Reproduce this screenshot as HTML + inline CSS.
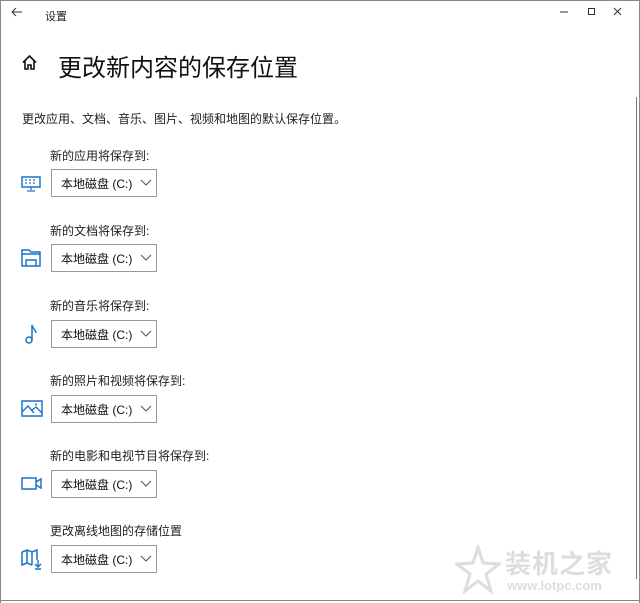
<!DOCTYPE html>
<html><head><meta charset="utf-8"><style>
body{margin:0;width:640px;height:603px;background:#fff;position:relative;overflow:hidden;font-family:"Liberation Sans","Noto Sans CJK SC",sans-serif;color:#000}
.a{position:absolute}
.lbl{position:absolute;left:50px;font-size:12px;color:#222}
.dd{position:absolute;left:51px;width:104px;height:26px;border:1px solid #999;box-sizing:content-box}
.dd span{position:absolute;left:9px;top:5px;font-size:12px;color:#111}
.dd svg{position:absolute;left:88px;top:9px}
.ic{position:absolute;left:20px}
</style></head><body>
<div class="a" style="left:0;top:0;width:1px;height:603px;background:#888"></div>
<div class="a" style="right:0;top:0;width:1px;height:603px;background:#888"></div>
<div class="a" style="left:0;top:0;width:640px;height:1px;background:#888"></div>
<div class="a" style="left:0;bottom:2px;width:640px;height:1px;background:#888"></div>
<div class="a" style="left:636px;top:97px;width:1px;height:482px;background:#777"></div>
<svg class="a" style="left:10px;top:6px" width="14" height="12"><path d="M2 6H12M2 6L6 2M2 6L6 10" stroke="#333" stroke-width="1" fill="none"/></svg>
<div class="a" style="left:45px;top:8px;font-size:11px;color:#222">设置</div>
<svg class="a" style="left:556px;top:6px" width="70" height="12"><path d="M4 6H12" stroke="#333"/><rect x="32.5" y="2.5" width="6" height="6" fill="none" stroke="#333"/><path d="M58 2L65 9M65 2L58 9" stroke="#333"/></svg>
<svg class="a" style="left:21px;top:54px" width="17" height="17"><path d="M2 8.5L8.5 2L15 8.5M4 7V15H7V11H10V15H13V7" stroke="#111" stroke-width="1.6" fill="none"/></svg>
<div class="a" style="left:58px;top:48px;font-size:24px;color:#111">更改新内容的保存位置</div>
<div class="a" style="left:22px;top:110px;font-size:12px;color:#222">更改应用、文档、音乐、图片、视频和地图的默认保存位置。</div>

<div class="lbl" style="top:147px">新的应用将保存到:</div>
<div class="dd" style="top:169px"><span>本地磁盘 (C:)</span><svg width="12" height="8"><path d="M1 1L6 6L11 1" stroke="#555" fill="none"/></svg></div>
<svg class="ic" style="top:175px" width="22" height="18"><rect x="2" y="2" width="18" height="10" fill="none" stroke="#1a73c9" stroke-width="1.5"/><path d="M5 5h2M9 5h2M13 5h2M5 8h2M9 8h2M13 8h2M11 12v3M7 16h8" stroke="#1a73c9" stroke-width="1.3"/></svg>

<div class="lbl" style="top:222px">新的文档将保存到:</div>
<div class="dd" style="top:244px"><span>本地磁盘 (C:)</span><svg width="12" height="8"><path d="M1 1L6 6L11 1" stroke="#555" fill="none"/></svg></div>
<svg class="ic" style="top:247px" width="22" height="22"><path d="M2 3H9L11 5H20V19H2Z M2 7H20 M6 19V13H16V19" fill="none" stroke="#1a73c9" stroke-width="1.5"/></svg>

<div class="lbl" style="top:297px">新的音乐将保存到:</div>
<div class="dd" style="top:320px"><span>本地磁盘 (C:)</span><svg width="12" height="8"><path d="M1 1L6 6L11 1" stroke="#555" fill="none"/></svg></div>
<svg class="ic" style="top:322px" width="22" height="24"><circle cx="9" cy="18" r="3" fill="none" stroke="#1a73c9" stroke-width="1.5"/><path d="M12 18V3C13 7 16 8 16 11" fill="none" stroke="#1a73c9" stroke-width="1.5"/></svg>

<div class="lbl" style="top:372px">新的照片和视频将保存到:</div>
<div class="dd" style="top:395px"><span>本地磁盘 (C:)</span><svg width="12" height="8"><path d="M1 1L6 6L11 1" stroke="#555" fill="none"/></svg></div>
<svg class="ic" style="top:399px" width="24" height="20"><rect x="2" y="2" width="20" height="15" fill="none" stroke="#1a73c9" stroke-width="1.5"/><path d="M2 13L8 7L14 14M12 11L16 8L22 14" fill="none" stroke="#1a73c9" stroke-width="1.4"/><circle cx="16" cy="5.5" r="1" fill="#1a73c9"/></svg>

<div class="lbl" style="top:447px">新的电影和电视节目将保存到:</div>
<div class="dd" style="top:470px"><span>本地磁盘 (C:)</span><svg width="12" height="8"><path d="M1 1L6 6L11 1" stroke="#555" fill="none"/></svg></div>
<svg class="ic" style="top:476px" width="24" height="16"><rect x="2" y="2" width="14" height="11" fill="none" stroke="#1a73c9" stroke-width="1.5"/><path d="M16 6L21 3V12L16 9" fill="none" stroke="#1a73c9" stroke-width="1.5"/></svg>

<div class="lbl" style="top:522px">更改离线地图的存储位置</div>
<div class="dd" style="top:545px"><span>本地磁盘 (C:)</span><svg width="12" height="8"><path d="M1 1L6 6L11 1" stroke="#555" fill="none"/></svg></div>
<svg class="ic" style="top:548px" width="24" height="24"><path d="M2 4L7 2L12 4L17 2V12M2 4V17L7 15L12 17M7 2V15M12 4V17" fill="none" stroke="#1a73c9" stroke-width="1.5"/><path d="M18 12V19M15 16L18 19L21 16M15 21H21" fill="none" stroke="#1a73c9" stroke-width="1.4"/></svg>

<svg class="a" style="left:455px;top:545px" width="46" height="52"><path d="M23 2L28 18L44 19L31 29L36 46L23 36L10 46L15 29L2 19L18 18Z" fill="none" stroke="#ddd" stroke-width="3"/></svg>
<div class="a" style="left:505px;top:544px;font-size:26px;font-weight:bold;color:#ddd;letter-spacing:1px">装机之家</div>
<div class="a" style="left:507px;top:578px;font-size:13px;font-weight:bold;color:#ddd">www.lotpc.com</div>
</body></html>
